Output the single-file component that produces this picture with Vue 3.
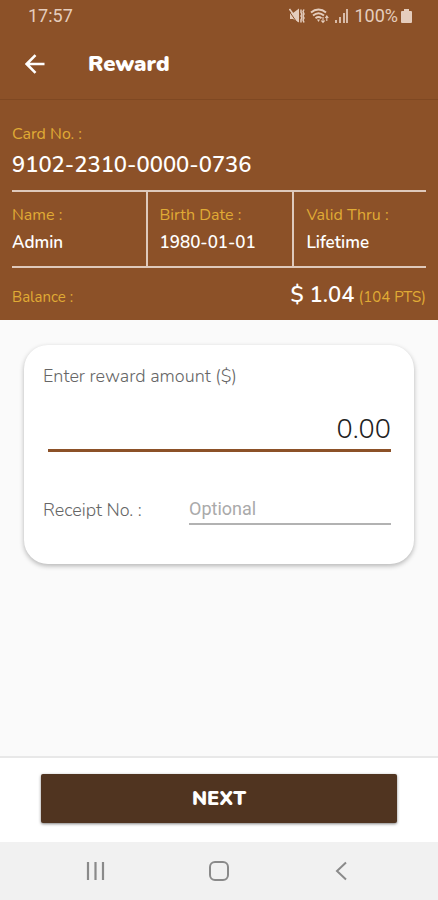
<script setup>
import { ref } from 'vue'

const amount = ref('0.00')
const receipt = ref('')

const details = [
  { label: 'Name :', value: 'Admin' },
  { label: 'Birth Date :', value: '1980-01-01' },
  { label: 'Valid Thru :', value: 'Lifetime' },
]
</script>

<template>
  <div class="screen">
    <header class="top">
      <div class="status">
        <span>17:57</span>
        <div class="status-icons">
          <svg width="16" height="16" viewBox="0 0 16 16" aria-hidden="true">
            <path d="M1 5h3l6-4.500v14L4 11H1z" fill="currentColor" />
            <path d="M0.500 1 9 13" stroke="currentColor" stroke-width="1.600" />
            <path d="M0 3 8 14.500" stroke="#8c5128" stroke-width="1" />
            <path d="M12 1.500v3l1 1.500-1 2 1 2-1 1.500v3M15 1.500l-1 2 1 2.500-1 2 1 2-1 2 1 2.500" fill="none" stroke="currentColor" stroke-width="1.500" />
          </svg>
          <svg width="20" height="16" viewBox="0 0 20 16" fill="none" stroke="currentColor" aria-hidden="true">
            <path d="M1 4.500C5.500 0.500 11.500 0.500 16 4.500M3 7.500C6.500 4.500 10.500 4.500 14 7.500M5.500 10.200c2-1.500 4-1.500 6 0" stroke-width="1.900" />
            <path d="M7 11.500h3L8.500 14z" fill="currentColor" stroke="none" />
            <path d="M13 9v5.500m-1.800-2 1.800 2 1.800-2M16.800 13V8m-1.500 2 1.500-2 1.500 2" stroke-width="1.100" />
          </svg>
          <svg width="14" height="16" viewBox="0 0 14 16" fill="currentColor" aria-hidden="true">
            <path d="M0 12h2v3H0zM4 9h2v6H4zM8 5h2v10H8zM11 1h2v14h-2z" opacity=".85" />
          </svg>
          <span class="percent">100%</span>
          <svg width="11" height="16" viewBox="0 0 11 16" fill="currentColor" aria-hidden="true">
            <path d="M3 1h5v2h2q1 0 1 1v10q0 1-1 1H1q-1 0-1-1V4q0-1 1-1h2z" />
          </svg>
        </div>
      </div>
      <div class="appbar">
        <button class="back" type="button" aria-label="Back">
          <svg width="20" height="20" viewBox="0 0 20 20" fill="none" stroke="currentColor" stroke-width="2.600" aria-hidden="true">
            <path d="M19.500 10H2M10.500 1.200 1.700 10l8.800 8.800" />
          </svg>
        </button>
        <h1>Reward</h1>
      </div>
    </header>

    <section class="member">
      <div class="label">Card No. :</div>
      <div class="card-number">9102-2310-0000-0736</div>
      <div class="details">
        <div v-for="item in details" :key="item.label" class="detail">
          <div class="label">{{ item.label }}</div>
          <div class="value">{{ item.value }}</div>
        </div>
      </div>
      <div class="balance">
        <span class="label">Balance :</span>
        <span><strong>$ 1.04</strong> <span class="label">(104 PTS)</span></span>
      </div>
    </section>

    <main>
      <form class="panel" @submit.prevent>
        <label for="amount">Enter reward amount ($)</label>
        <div class="amount-row">
          <input id="amount" v-model="amount" class="amount" inputmode="decimal" />
        </div>
        <div class="receipt">
          <label for="receipt">Receipt No. :</label>
          <input id="receipt" v-model="receipt" placeholder="Optional" />
        </div>
      </form>
    </main>

    <footer class="actions">
      <button class="next" type="button">NEXT</button>
    </footer>
    <nav class="system">
      <button type="button" aria-label="Recent apps">
        <svg width="20" height="20" viewBox="0 0 20 20" fill="none" stroke="currentColor" stroke-width="2.200"><path d="M2 1v18M9.500 1v18M17 1v18" /></svg>
      </button>
      <button type="button" aria-label="Home">
        <svg width="20" height="20" viewBox="0 0 20 20" fill="none" stroke="currentColor" stroke-width="2"><rect x="1" y="1" width="18" height="18" rx="5" /></svg>
      </button>
      <button type="button" aria-label="Go back">
        <svg width="20" height="20" viewBox="0 0 20 20" fill="none" stroke="currentColor" stroke-width="2"><path d="M14 1.500 5 10l9 8.500" /></svg>
      </button>
    </nav>
  </div>
</template>

<style>
body {
  margin: 0;
}
</style>

<style scoped>
* {
  box-sizing: border-box;
}
.screen {
  min-height: 100vh;
  display: flex;
  flex-direction: column;
  background: #fafafa;
  font-family: Nunito, Lato, sans-serif;
}
button,
input {
  font-family: inherit;
}
button {
  border: 0;
  padding: 0;
  background: none;
  color: inherit;
}
.top {
  background: #8c5128;
  border-bottom: 1px solid #7f4822;
  color: #fff;
}
.status {
  height: 32px;
  padding: 0 26px 0 28px;
  display: flex;
  align-items: center;
  justify-content: space-between;
  color: #e5cdbd;
  font: 18px/32px Roboto, sans-serif;
}
.status-icons {
  display: flex;
  align-items: center;
  gap: 5px;
}
.percent {
  margin-right: -2px;
}
.appbar {
  height: 67px;
  padding: 0 24px 4px 25px;
  display: flex;
  align-items: center;
  gap: 43px;
}
.back,
.back svg {
  display: block;
}
h1 {
  margin: 0;
  font: 900 22px/24px Nunito, "Noto Sans", sans-serif;
}
.member {
  background: #8c5128;
  color: #fff;
  padding: 24px 12px 0;
}
.label {
  color: #e0ab35;
  font-size: 16px;
  line-height: 20px;
}
.card-number {
  font-size: 22px;
  font-weight: 600;
  line-height: 32px;
  padding: 5px 0 9px;
}
.details {
  display: grid;
  grid-template-columns: 10fr 11fr 10fr;
  border-top: 2px solid #dfc9bb;
  border-bottom: 2px solid #dfc9bb;
}
.detail {
  padding: 13px 0 11px 12px;
}
.detail:first-child {
  padding-left: 0;
}
.detail + .detail {
  border-left: 2px solid #dfc9bb;
}
.value {
  font-size: 17px;
  font-weight: 600;
  line-height: 24px;
  padding-top: 6px;
}
.balance {
  height: 52px;
  display: flex;
  align-items: baseline;
  justify-content: space-between;
  padding-top: 11px;
}
.balance .label {
  font-size: 15px;
}
strong {
  font-size: 22px;
  font-weight: 600;
  line-height: 32px;
}
main {
  flex: 1;
  padding: 25px 24px;
}
.panel {
  background: #fff;
  border-radius: 24px;
  padding: 20px 23px 39px 19px;
  box-shadow: 0 2px 5px rgba(0, 0, 0, 0.28);
  color: #666;
  font-size: 18px;
  font-weight: 300;
}
.panel label {
  display: block;
  line-height: 22px;
}
input {
  display: block;
  width: 100%;
  min-width: 0;
  border: 0;
  border-radius: 0;
  outline: 0;
  padding: 0;
  background: none;
}
.amount-row {
  padding: 22px 0 0 5px;
}
.amount {
  height: 43px;
  border-bottom: 3px solid #8c5128;
  color: #222;
  font-size: 27px;
  font-weight: 300;
  text-align: right;
}
.receipt {
  display: grid;
  grid-template-columns: 146px 1fr;
  align-items: center;
  margin-top: 42px;
}
.receipt input {
  height: 31px;
  border-bottom: 2px solid #b2b2b2;
  color: #222;
  font: 18px Roboto, sans-serif;
}
.receipt input::placeholder {
  color: #aaa;
  opacity: 1;
}
.actions {
  background: #fff;
  border-top: 2px solid #e8e8e8;
  padding: 16px 41px 19px;
}
.next {
  display: block;
  width: 100%;
  height: 49px;
  border-radius: 2px;
  background: #503420;
  color: #fff;
  box-shadow: 0 1px 3px rgba(0, 0, 0, 0.5);
  font-size: 20px;
  font-weight: 900;
}
.system {
  height: 58px;
  background: #f1f1f1;
  color: #8a8a8a;
  padding: 0 35px 0 34px;
  display: grid;
  grid-template-columns: repeat(3, 1fr);
  place-items: center;
}
.system svg {
  display: block;
}
</style>
